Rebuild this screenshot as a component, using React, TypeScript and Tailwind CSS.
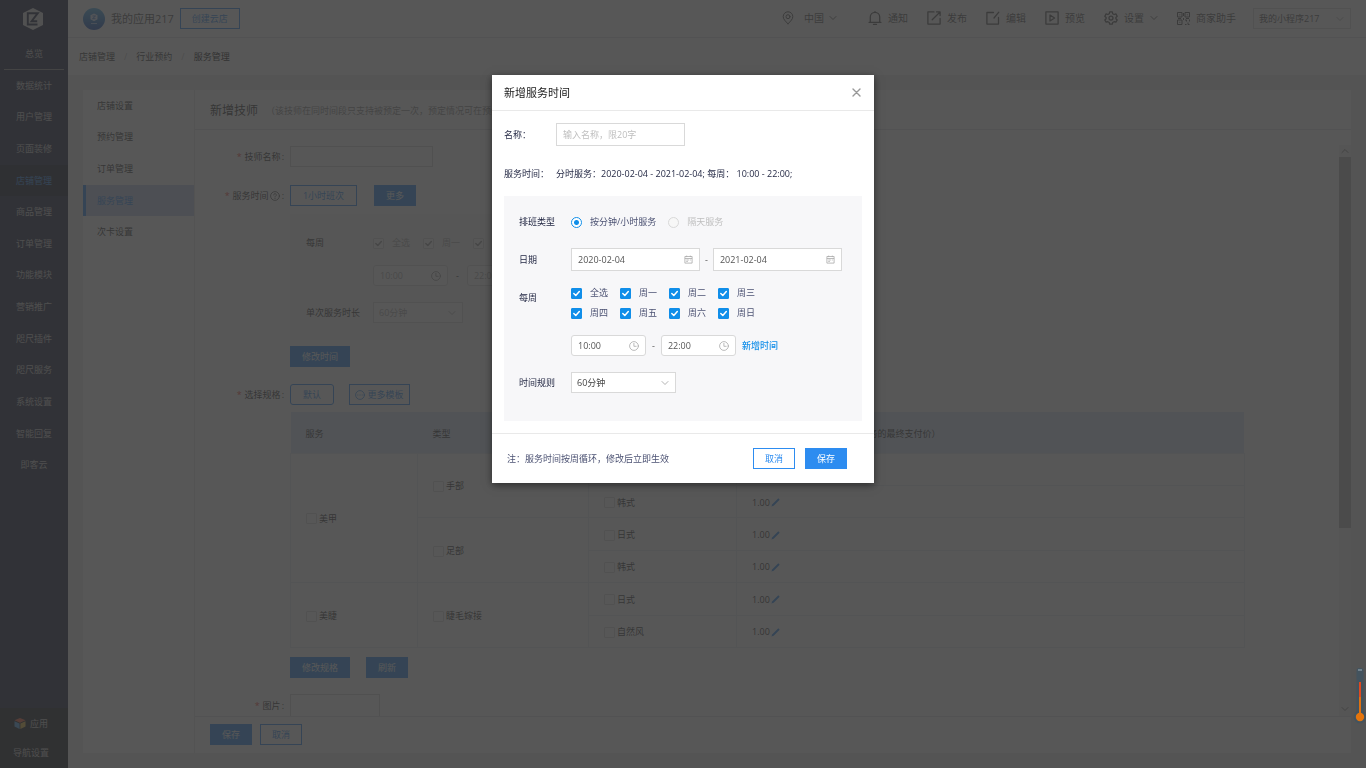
import React, { useState } from "react";

type IconProps = { className?: string };

const stroke = {
  fill: "none",
  stroke: "currentColor",
  strokeLinecap: "round" as const,
  strokeLinejoin: "round" as const,
};

function LogoIcon({ className }: IconProps) {
  return (
    <svg viewBox="0 0 20 22" className={className} aria-hidden="true">
      <path d="M10 0 20 5v12l-10 5L0 17V5z" fill="#d8d8d8" />
      <path d="M14.500 16.500H4.800V5.200h10L8.600 13.200h5.600" fill="none" stroke="#181e3a" strokeWidth="1.900" />
    </svg>
  );
}

function PinIcon({ className }: IconProps) {
  return (
    <svg viewBox="0 0 12 14" className={className} {...stroke} strokeWidth="1" aria-hidden="true">
      <path d="M6 12.800C3.200 10 1.200 8 1.200 5.600a4.800 4.800 0 0 1 9.600 0C10.800 8 8.800 10 6 12.800z" />
      <circle cx="6" cy="5.700" r="2" />
    </svg>
  );
}

function BellIcon({ className }: IconProps) {
  return (
    <svg viewBox="0 0 14 14" className={className} {...stroke} strokeWidth="1.300" aria-hidden="true">
      <path d="M1 11.300h12M2.300 11.300V6a4.700 4.700 0 0 1 9.400 0v5.300M5.500 13.500h3M7 .6v.7" />
    </svg>
  );
}

function PublishIcon({ className }: IconProps) {
  return (
    <svg viewBox="0 0 14 14" className={className} {...stroke} strokeWidth="1.300" aria-hidden="true">
      <path d="M7 .9H.9v12.200h12.200V7.500M5.200 8.800 12.800 1.200M9.500.9h3.600v3.600" />
    </svg>
  );
}

function EditIcon({ className }: IconProps) {
  return (
    <svg viewBox="0 0 14 14" className={className} {...stroke} strokeWidth="1.300" aria-hidden="true">
      <path d="M7.500 1.500H.9v11.600h11.600V6.500M8 7 12.800 1.200" />
    </svg>
  );
}

function PreviewIcon({ className }: IconProps) {
  return (
    <svg viewBox="0 0 14 14" className={className} {...stroke} strokeWidth="1.300" aria-hidden="true">
      <path d="M.9.9h12.200v12.200H.9zM5 4v6l4.600-3z" />
    </svg>
  );
}

function GearIcon({ className }: IconProps) {
  return (
    <svg viewBox="0 0 14 14" className={className} {...stroke} strokeWidth="1.300" aria-hidden="true">
      <path d="M5.700.9h2.600l.4 1.800 1.400.8 1.800-.6 1.300 2.300-1.300 1.200v1.400l1.300 1.200-1.300 2.200-1.800-.5-1.400.8-.4 1.700H5.700l-.4-1.700-1.400-.8-1.800.5L.8 9l1.300-1.200V6.400L.8 5.200l1.300-2.300 1.800.6 1.400-.8z" />
      <circle cx="7" cy="7.100" r="2" />
    </svg>
  );
}

function QrIcon({ className }: IconProps) {
  return (
    <svg viewBox="0 0 13 13" className={className} fill="none" stroke="currentColor" aria-hidden="true">
      <path d="M.5.5h4.500v4.500H.5zM8 .5h4.500v4.500H8zM.5 8h4.500v4.500H.5zM8 8h1.500v1.500M12.500 7.500v2M8 12.500h1.500M11 10.500v2h1.500M2.300 2.800h1M9.800 2.800h1M2.300 10.300h1M6.500 1v3M6.500 6v2M9 6.500h3M1 6.500h3" />
    </svg>
  );
}

function ChevronIcon({ className }: IconProps) {
  return (
    <svg viewBox="0 0 8 8" className={className} {...stroke} strokeWidth=".9" aria-hidden="true">
      <path d="m1 2.500 3 3 3-3" />
    </svg>
  );
}

function ClockIcon({ className }: IconProps) {
  return (
    <svg viewBox="0 0 10 10" className={className} {...stroke} strokeWidth=".8" aria-hidden="true">
      <circle cx="5" cy="5" r="4.400" />
      <path d="M4.900 2.400v2.900h2.300" />
    </svg>
  );
}

function CalendarIcon({ className }: IconProps) {
  return (
    <svg viewBox="0 0 9 9" className={className} fill="none" stroke="currentColor" strokeWidth=".8" aria-hidden="true">
      <path d="M.9 1.500h7.200v6.600H.9zM.9 3.500h7.200M2.700.6v1.500M6.300.6v1.500M2.300 5h2.500M2.300 6.500h1.500M5.800 5h1" />
    </svg>
  );
}

function CloseIcon({ className }: IconProps) {
  return (
    <svg viewBox="0 0 9 9" className={className} {...stroke} strokeWidth="1.400" aria-hidden="true">
      <path d="m1 1 7 7M8 1 1 8" />
    </svg>
  );
}

function CubeIcon({ className }: IconProps) {
  return (
    <svg viewBox="0 0 12 11" className={className} aria-hidden="true">
      <path d="M6 0 11.500 2.300 6 4.800.5 2.300z" fill="#f0603a" />
      <path d="M.5 3.200 5.600 5.600V11L.5 8.400z" fill="#4aa3e8" />
      <path d="M11.500 3.200 6.400 5.600V11l5.100-2.600z" fill="#e6b93c" />
    </svg>
  );
}

function PenIcon({ className }: IconProps) {
  return (
    <svg viewBox="0 0 9 9" className={className} aria-hidden="true">
      <path d="M7.300.3 8.700 1.700 2.700 7.700.4 8.600 1.300 6.300z" fill="#2d8cf0" />
    </svg>
  );
}

function Thermometer({ className }: IconProps) {
  return (
    <svg viewBox="0 0 14 58" className={className} aria-hidden="true">
      <rect x="3.500" y="1" width="7" height="50" rx="2.500" fill="#43535e" />
      <circle cx="7" cy="50" r="6.300" fill="#43535e" />
      <path d="M5 3h4" stroke="#9fb0ba" strokeWidth="1" />
      <path d="M6 15h2v31H6z" fill="#e0491f" />
      <path d="M6 30h2v18H6z" fill="#e07010" />
      <circle cx="7" cy="50" r="4.200" fill="#e4740c" />
    </svg>
  );
}

const outlineBtn = "h-[21px] border border-[#2d8cf0] bg-white text-[#2d8cf0]";
const solidBtn = "h-[21px] bg-[#2d8cf0] text-white";

const sideItems = [
  "数据统计", "用户管理", "页面装修", "店铺管理", "商品管理", "订单管理", "功能模块",
  "营销推广", "咫尺插件", "咫尺服务", "系统设置", "智能回复", "即客云",
];

function Sidebar() {
  return (
    <aside className="flex w-[68px] shrink-0 flex-col bg-[#181e3a] text-[#c8c8c8]">
      <div className="flex h-[38px] items-center pl-[23px]">
        <LogoIcon className="h-[22px] w-5" />
      </div>
      <a href="#overview" className="mx-1 flex h-8 items-center justify-center border-b border-[#8c8c8c]">总览</a>
      <nav className="flex h-[411px] flex-col">
        {sideItems.map((t) => (
          <a
            key={t}
            href={"#" + t}
            className={
              t === "店铺管理"
                ? "flex flex-1 items-center justify-center bg-[#0c1222] text-[#2d8cf0]"
                : "flex flex-1 items-center justify-center"
            }
          >
            {t}
          </a>
        ))}
      </nav>
      <div className="mt-auto flex h-[60px] flex-col bg-[#12161e] pt-px">
        <a href="#apps" className="flex h-[30px] items-center gap-1 pl-[14px]">
          <CubeIcon className="h-[11px] w-3" />
          应用
        </a>
        <a href="#nav" className="flex h-[30px] items-center pl-[13px]">导航设置</a>
      </div>
    </aside>
  );
}

function HeaderLink({ icon, text, chevron }: { icon: React.ReactNode; text: string; chevron?: boolean }) {
  return (
    <a href={"#" + text} className="flex items-center gap-[6px]">
      {icon}
      {text}
      {chevron && <ChevronIcon className="h-2 w-2" />}
    </a>
  );
}

function Header() {
  return (
    <header className="flex h-[38px] items-center border-b border-[#dcdee2] bg-white pl-[15px] pr-[15px] text-[#555]">
      <span className="flex h-[22px] w-[22px] items-center justify-center rounded-full bg-linear-to-b from-[#4fb0e8] to-[#1c50b8]">
        <svg viewBox="0 0 12 12" className="h-3 w-3" aria-hidden="true">
          <path d="M6 .5 9.500 2.300v4L6 8.200 2.500 6.300v-4z" fill="#dfeaff" />
          <path d="M4.500 3h3l-3 2.700h3" fill="none" stroke="#2c6cc8" strokeWidth=".8" />
          <path d="M3 10.500h6" stroke="#a9c8f5" />
        </svg>
      </span>
      <span className="ml-[6px] text-[11px]">我的应用217</span>
      <button type="button" className={outlineBtn + " ml-[6px] w-[60px]"}>创建云店</button>
      <nav className="ml-auto flex items-center pb-px text-[10px]">
        <a href="#region" className="mr-[31px] flex items-center">
          <PinIcon className="mr-[10px] h-[14px] w-3" />
          中国
          <ChevronIcon className="ml-[5px] h-2 w-2" />
        </a>
        <div className="flex items-center gap-[19px]">
          <HeaderLink icon={<BellIcon className="h-[14px] w-[14px]" />} text="通知" />
          <HeaderLink icon={<PublishIcon className="h-[14px] w-[14px]" />} text="发布" />
          <HeaderLink icon={<EditIcon className="h-[14px] w-[14px]" />} text="编辑" />
          <HeaderLink icon={<PreviewIcon className="h-[14px] w-[14px]" />} text="预览" />
          <HeaderLink icon={<GearIcon className="h-[14px] w-[14px]" />} text="设置" chevron />
          <HeaderLink icon={<QrIcon className="h-[13px] w-[13px]" />} text="商家助手" />
        </div>
      </nav>
      <SelectBox
        label="小程序"
        options={["我的小程序217"]}
        className="ml-[17px] h-[21px] w-[98px] text-[#555]"
      />
    </header>
  );
}

function SelectBox({ label, options, className, disabled }: { label: string; options: string[]; className: string; disabled?: boolean }) {
  return (
    <span className={"grid items-center border border-[#d9d9d9] bg-white " + className}>
      <select
        aria-label={label}
        disabled={disabled}
        className="col-start-1 row-start-1 h-full w-full appearance-none bg-transparent pl-[5px] opacity-100 outline-none"
      >
        {options.map((o) => (
          <option key={o}>{o}</option>
        ))}
      </select>
      <ChevronIcon className="pointer-events-none col-start-1 row-start-1 mr-[6px] h-2 w-2 justify-self-end text-[#aaa]" />
    </span>
  );
}

function Check({ label, checked, disabled, bare }: { label: string; checked?: boolean; disabled?: boolean; bare?: boolean }) {
  const [on, setOn] = useState(!!checked);
  return (
    <label className={bare ? "flex items-center gap-[2px]" : "flex items-center gap-2"}>
      <span className="grid">
        <input
          type="checkbox"
          checked={on}
          disabled={disabled}
          onChange={() => setOn(!on)}
          className="col-start-1 row-start-1 h-[11px] w-[11px] appearance-none rounded-[1px] border border-[#d9d9d9] bg-white enabled:checked:border-[#108ee9] enabled:checked:bg-[#108ee9]"
        />
        {on && (
          <svg
            viewBox="0 0 11 11"
            className={"pointer-events-none col-start-1 row-start-1 h-[11px] w-[11px] " + (disabled ? "text-[#999]" : "text-white")}
            {...stroke}
            strokeWidth="1.500"
            aria-hidden="true"
          >
            <path d="M2.800 5.500 4.800 7.500 8.300 3.600" />
          </svg>
        )}
      </span>
      {label}
    </label>
  );
}

function IconInput({ label, value, icon, className, disabled }: { label: string; value: string; icon: React.ReactNode; className: string; disabled?: boolean }) {
  return (
    <span className={"flex items-center border border-[#d9d9d9] bg-white pr-[6px] " + className}>
      <input
        type="text"
        aria-label={label}
        defaultValue={value}
        disabled={disabled}
        className="h-full w-full min-w-0 bg-transparent pl-[6px] outline-none"
      />
      {icon}
    </span>
  );
}

const days = ["全选", "周一", "周二", "周三", "周四", "周五", "周六", "周日"];

function Req({ text, htmlFor, help }: { text: string; htmlFor?: string; help?: boolean }) {
  return (
    <label htmlFor={htmlFor} className="flex items-center justify-end">
      <span className="mr-[3px] text-[#f04134]">*</span>
      {text}
      {help && (
        <svg viewBox="0 0 10 10" className="mx-px h-[10px] w-[10px]" {...stroke} strokeWidth=".7" aria-hidden="true">
          <circle cx="5" cy="5" r="4.400" />
          <path d="M3.700 4a1.300 1.300 0 1 1 1.900 1.100c-.4.3-.6.5-.6 1M5 7.400v.2" />
        </svg>
      )}
      <span className="ml-px">:</span>
    </label>
  );
}

const rowGrid = "grid grid-cols-[89px_minmax(0,1fr)] gap-x-[6px]";
const td = "border border-[#e3e8ee] pl-[15px] pt-[2px]";
const th = "pl-[15px] pt-1 font-normal";

function PriceCells({ style }: { style: string }) {
  return (
    <>
      <td className={td}><Check bare label={style} /></td>
      <td className={td}>
        <span className="flex items-center gap-px">
          1.00
          <button type="button" aria-label="修改价格"><PenIcon className="h-[9px] w-[9px]" /></button>
        </span>
      </td>
    </>
  );
}

function SpecTable() {
  return (
    <table className="mt-[7px] h-[236px] w-[91%] table-fixed border-collapse text-left">
      <colgroup>
        <col className="w-[127px]" />
        <col className="w-[171px]" />
        <col className="w-[148px]" />
        <col />
      </colgroup>
      <thead>
        <tr className="h-[41px] bg-[#d8e6f8]">
          <th className={th}>服务</th>
          <th className={th}>类型</th>
          <th className={th}>风格</th>
          <th className={th}>价格（此价格为技师提供该服务的最终支付价）</th>
        </tr>
      </thead>
      <tbody>
        <tr>
          <td className={td} rowSpan={4}><Check bare label="美甲" /></td>
          <td className={td} rowSpan={2}><Check bare label="手部" /></td>
          <PriceCells style="日式" />
        </tr>
        <tr><PriceCells style="韩式" /></tr>
        <tr>
          <td className={td} rowSpan={2}><Check bare label="足部" /></td>
          <PriceCells style="日式" />
        </tr>
        <tr><PriceCells style="韩式" /></tr>
        <tr>
          <td className={td} rowSpan={2}><Check bare label="美睫" /></td>
          <td className={td} rowSpan={2}><Check bare label="睫毛嫁接" /></td>
          <PriceCells style="日式" />
        </tr>
        <tr><PriceCells style="自然风" /></tr>
      </tbody>
    </table>
  );
}

function TechnicianForm() {
  return (
    <div className="min-w-0 flex-1 pt-4">
      <div className={rowGrid}>
        <Req text="技师名称" htmlFor="tech-name" />
        <input id="tech-name" type="text" className="h-[21px] w-[143px] border border-[#d0d0d0] px-[6px]" />
      </div>
      <div className={rowGrid + " mt-[18px]"}>
        <Req text="服务时间" help />
        <div className="flex gap-[17px]">
          <button type="button" className={outlineBtn + " w-[67px]"}>1小时班次</button>
          <button type="button" className={solidBtn + " w-[42px]"}>更多</button>
        </div>
      </div>
      <div className="ml-[95px]">
        <div className="mt-2 grid h-[126px] w-[560px] grid-cols-[67px_1fr] content-start items-center bg-[#f8f8f8] px-4 pt-[19px]">
          <span>每周</span>
          <div className="flex h-5 items-center gap-[13px] text-[#aaa]">
            {days.map((d) => (
              <Check key={d} label={d} checked disabled />
            ))}
          </div>
          <div className="col-start-2 mt-3 flex items-center gap-2 text-[#aaa]">
            <IconInput label="开始" value="10:00" disabled icon={<ClockIcon className="h-[10px] w-[10px] shrink-0 text-[#888]" />} className="h-[21px] w-[75px] rounded-[3px]" />
            <span className="text-[#333]">-</span>
            <IconInput label="结束" value="22:00" disabled icon={<ClockIcon className="h-[10px] w-[10px] shrink-0 text-[#888]" />} className="h-[21px] w-[75px] rounded-[3px]" />
          </div>
          <span className="mt-4">单次服务时长</span>
          <SelectBox label="单次服务时长" options={["60分钟"]} disabled className="mt-4 h-[21px] w-[90px] text-[#aaa]" />
        </div>
        <button type="button" className={solidBtn + " mt-[6px] w-[60px]"}>修改时间</button>
      </div>
      <div className={rowGrid + " mt-[17px]"}>
        <Req text="选择规格" />
        <div className="flex gap-[15px]">
          <button type="button" className={outlineBtn + " w-11 rounded-[3px]"}>默认</button>
          <button type="button" className={outlineBtn + " flex w-[61px] items-center justify-center gap-[2px]"}>
            <svg viewBox="0 0 10 10" className="h-[10px] w-[10px]" {...stroke} strokeWidth=".8" aria-hidden="true">
              <circle cx="5" cy="5" r="4.400" />
              <path d="M2.800 5h.1M5 5h.1M7.100 5h.1" strokeWidth="1" />
            </svg>
            更多模板
          </button>
        </div>
      </div>
      <div className="ml-[95px]">
        <SpecTable />
        <div className="mt-[9px] flex gap-4">
          <button type="button" className={solidBtn + " w-[60px]"}>修改规格</button>
          <button type="button" className={solidBtn + " w-[42px]"}>刷新</button>
        </div>
      </div>
      <div className={rowGrid + " mt-4"}>
        <div className="pt-[6px]"><Req text="图片" /></div>
        <button type="button" aria-label="上传图片" className="h-[90px] w-[90px] border border-[#d0d0d0]" />
      </div>
    </div>
  );
}

function Scrollbar() {
  return (
    <div className="mt-[15px] flex w-3 shrink-0 flex-col bg-[#f1f1f1] text-[#777]" aria-hidden="true">
      <ChevronIcon className="mx-[2px] my-[2px] h-2 w-2 rotate-180" />
      <div className="h-[65%] bg-[#b4b4b4]" />
      <ChevronIcon className="mx-[2px] mb-[3px] mt-auto h-2 w-2" />
    </div>
  );
}

function DateField({ label, value }: { label: string; value: string }) {
  return (
    <IconInput
      label={label}
      value={value}
      icon={<CalendarIcon className="h-[9px] w-[9px] shrink-0 text-[#aaa]" />}
      className="h-[23px] w-[129px]"
    />
  );
}

function ServiceTimeDialog() {
  const time = "h-[21px] w-[75px] rounded-[3px]";
  return (
    <div role="dialog" aria-labelledby="dialog-title" className="w-[382px] bg-white text-[#1f2440] shadow-[0_2px_8px_rgba(0,0,0,0.5)]">
      <div className="flex h-9 items-center justify-between border-b border-[#e9e9e9] pl-3 pr-[13px]">
        <h2 id="dialog-title" className="text-[11px] text-[#1a1a1a]">新增服务时间</h2>
        <button type="button" aria-label="关闭" className="text-[#999]"><CloseIcon className="h-[9px] w-[9px]" /></button>
      </div>
      <div className="px-3 py-3">
        <div className="grid grid-cols-[52px_1fr] items-center">
          <label htmlFor="time-name">名称：</label>
          <input
            id="time-name"
            type="text"
            placeholder="输入名称，限20字"
            className="h-[23px] w-[129px] border border-[#d9d9d9] px-[6px] outline-none placeholder:text-[#bfbfbf]"
          />
        </div>
        <div className="mt-[22px] grid h-3 grid-cols-[52px_1fr] items-center">
          <span>服务时间：</span>
          <span>分时服务：2020-02-04 - 2021-02-04; 每周： 10:00 - 22:00;</span>
        </div>
        <div className="mt-4 grid grid-cols-[52px_1fr] items-center bg-[#f7f7f9] px-[15px] pb-7 pt-4 text-[#4c5273]">
          <span className="text-[#1f2440]">排班类型</span>
          <div className="flex h-5 items-center gap-3">
            <label className="flex items-center gap-2">
              <input
                type="radio"
                name="shift"
                defaultChecked
                className="h-[11px] w-[11px] appearance-none rounded-full border border-[#108ee9] bg-white bg-[radial-gradient(circle,#108ee9_0,#108ee9_2px,transparent_3px)]"
              />
              按分钟/小时服务
            </label>
            <label className="flex items-center gap-2 text-[#bfbfbf]">
              <input type="radio" name="shift" disabled className="h-[11px] w-[11px] appearance-none rounded-full border border-[#d9d9d9] bg-[#f7f7f7]" />
              隔天服务
            </label>
          </div>
          <span className="mt-4 text-[#1f2440]">日期</span>
          <div className="mt-4 flex items-center gap-[5px] text-[#555]">
            <DateField label="开始日期" value="2020-02-04" />
            <span>-</span>
            <DateField label="结束日期" value="2021-02-04" />
          </div>
          <span className="mt-3 self-start pt-[9px] text-[#1f2440]">每周</span>
          <div className="mt-3 grid grid-cols-[repeat(4,49px)]">
            {days.map((d) => (
              <div key={d} className="flex h-5 items-center"><Check label={d} checked /></div>
            ))}
          </div>
          <div className="col-start-2 mt-3 flex items-center gap-[6px] text-[#555]">
            <IconInput label="开始时间" value="10:00" icon={<ClockIcon className="h-[10px] w-[10px] shrink-0 text-[#aaa]" />} className={time} />
            <span>-</span>
            <IconInput label="结束时间" value="22:00" icon={<ClockIcon className="h-[10px] w-[10px] shrink-0 text-[#aaa]" />} className={time} />
            <button type="button" className="font-medium text-[#108ee9]">新增时间</button>
          </div>
          <span className="mt-4 text-[#1f2440]">时间规则</span>
          <SelectBox label="时间规则" options={["60分钟"]} className="mt-4 h-[21px] w-[105px] text-[#444]" />
        </div>
      </div>
      <div className="flex h-[50px] items-center border-t border-[#e9e9e9] pl-[15px] pr-[27px]">
        <p className="mr-auto text-[#4c5273]">注：服务时间按周循环，修改后立即生效</p>
        <button type="button" className={outlineBtn + " w-[42px]"}>取消</button>
        <button type="button" className={solidBtn + " ml-[10px] w-[42px]"}>保存</button>
      </div>
    </div>
  );
}

const subMenu = ["店铺设置", "预约管理", "订单管理", "服务管理", "次卡设置"];

export default function App() {
  return (
    <div className="flex h-screen overflow-hidden bg-[#e8e8e8] font-['Open_Sans','Noto_Sans_CJK_SC',sans-serif] text-[9px] leading-3 text-[#333]">
      <Sidebar />
      <div className="flex min-w-0 flex-1 flex-col">
        <Header />
        <nav className="flex h-[37px] shrink-0 items-center gap-[9px] bg-white pl-[11px]">
          <a href="#shop">店铺管理</a>
          <span className="text-[#bbb]">/</span>
          <a href="#booking">行业预约</a>
          <span className="text-[#bbb]">/</span>
          <a href="#service" className="text-[#111]">服务管理</a>
        </nav>
        <main className="m-[15px] flex min-h-0 flex-1 bg-white">
          <nav className="w-[112px] shrink-0 border-r border-[#e3e3e3]">
            <div className="flex h-[158px] flex-col">
              {subMenu.map((t) => (
                <a
                  key={t}
                  href={"#" + t}
                  className={
                    t === "服务管理"
                      ? "flex flex-1 items-center border-l-[3px] border-[#2d8cf0] bg-[#c0ccec] pl-[11px] text-[#2d8cf0]"
                      : "flex flex-1 items-center pl-[14px]"
                  }
                >
                  {t}
                </a>
              ))}
            </div>
          </nav>
          <section className="flex min-w-0 flex-1 flex-col">
            <div className="flex h-10 shrink-0 items-center overflow-hidden whitespace-nowrap border-b border-[#dcdee2] pl-[15px] pt-[3px]">
              <h1 className="text-xs">新增技师</h1>
              <p className="ml-2 text-[#8a8a8a]">（该技师在同时间段只支持被预定一次，预定情况可在预约管理中查看）</p>
            </div>
            <div className="flex min-h-0 flex-1 overflow-hidden">
              <TechnicianForm />
              <Scrollbar />
            </div>
            <div className="flex h-[37px] shrink-0 items-center gap-2 border-t border-[#dcdee2] pb-px pl-[15px]">
              <button type="button" className={solidBtn + " w-[42px]"}>保存</button>
              <button type="button" className={outlineBtn + " w-[42px]"}>取消</button>
            </div>
          </section>
        </main>
      </div>
      <div className="fixed inset-0 flex items-start justify-center bg-[rgba(55,55,55,0.84)] pt-[75px]">
        <ServiceTimeDialog />
      </div>
      <Thermometer className="fixed bottom-[43px] right-[-1px] h-[58px] w-[14px]" />
    </div>
  );
}
